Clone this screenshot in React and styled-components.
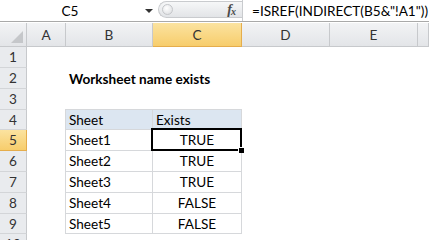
import React from "react"
import styled, { createGlobalStyle, css } from "styled-components"

const GlobalStyle = createGlobalStyle`
	html, body {
		margin: 0;
		padding: 0;
		background: #fff;
	}
	body {
		font-family: Lato, "Liberation Sans", sans-serif;
		color: #000;
	}
`

const COLS = "27px 39px 87px 89px 88px 88px 1fr"
const ROW_HEIGHTS = [21, 21, 21, 20, 21, 21, 21, 21, 20, 21]
const FONT = "13.6px"

const Screen = styled.div`
	width: 429px;
	height: 240px;
	overflow: hidden;
	background: #fff;
`

const FormulaBar = styled.div`
	display: flex;
	align-items: flex-start;
	height: 21px;
	border-bottom: 1px solid #a9a9a9;
	margin-bottom: 1px;
	& > * {
		flex-shrink: 0;
	}
`

const NameBox = styled.div`
	width: 140px;
	height: 21px;
	display: flex;
	align-items: center;
	justify-content: center;
	font-size: ${FONT};
`

const Dropdown = styled.div`
	width: 18px;
	height: 21px;
	display: flex;
	align-items: center;
	justify-content: center;
	&::after {
		content: '';
		border-left: 4px solid transparent;
		border-right: 4px solid transparent;
		border-top: 4px solid #333;
	}
`

const Grip = styled.div`
	display: flex;
	align-items: center;
	width: 84px;
	height: 17px;
	margin-top: 1px;
	box-sizing: border-box;
	border: 1px solid #c9cbce;
	border-right: none;
	border-radius: 9px 0 0 9px;
	background: linear-gradient(#f6f7f8, #e2e4e7);
`

const GripDot = styled.div`
	width: 9px;
	height: 9px;
	margin-left: 3px;
	border-radius: 50%;
	border: 1px solid #c4c6c9;
	background: radial-gradient(circle at 40% 35%, #ffffff, #d9dbde);
`

const Fx = styled.span`
	margin-left: auto;
	margin-right: 7px;
	font-family: "Liberation Serif", serif;
	font-style: italic;
	font-weight: bold;
	font-size: 14px;
	color: #4a4a4a;
	letter-spacing: -1px;
	sub {
		font-size: 10px;
		vertical-align: -1px;
	}
`

const FormulaInput = styled.div`
	flex: 1 1 auto !important;
	height: 21px;
	display: flex;
	align-items: center;
	padding-left: 9px;
	border-left: 1px solid #c9cbce;
	font-size: ${FONT};
	white-space: nowrap;
	overflow: hidden;
`

const Row = styled.div`
	display: grid;
	grid-template-columns: ${COLS};
	height: ${props => props.height}px;
`

const ColHeader = styled.div`
	background: ${props => (props.active
		? "linear-gradient(#fbe3a0, #f7cd6c)"
		: "linear-gradient(#f2f3f5, #e3e5e8)")};
	color: #333;
	box-sizing: border-box;
	border-right: 1px solid ${props => (props.active ? "#e5ad4c" : "#c7c9cc")};
	border-bottom: 1px solid ${props => (props.active ? "#e5ad4c" : "#c7c9cc")};
	display: flex;
	align-items: center;
	justify-content: center;
	font-size: ${FONT};
`

const Corner = styled(ColHeader)`
	position: relative;
	&::after {
		content: '';
		position: absolute;
		right: 3px;
		bottom: 3px;
		border-left: 12px solid transparent;
		border-bottom: 12px solid #c5c7ca;
	}
`

const RowHeader = styled.div`
	background: ${props => (props.active ? "linear-gradient(#fbe3a0, #f7cd6c)" : "#e9ebee")};
	color: #333;
	box-sizing: border-box;
	border-right: 1px solid ${props => (props.active ? "#e5ad4c" : "#c7c9cc")};
	border-bottom: 1px solid ${props => (props.active ? "#e5ad4c" : "#d3d5d8")};
	display: flex;
	align-items: center;
	justify-content: center;
	font-size: ${FONT};
`

const Cell = styled.div`
	box-sizing: border-box;
	display: flex;
	align-items: center;
	justify-content: ${props => (props.center ? "center" : "flex-start")};
	padding: 0 3px;
	font-size: ${FONT};
	font-weight: ${props => (props.bold ? 700 : 400)};
	white-space: nowrap;
	position: relative;
	${props => props.table && css`
		border-right: 1px solid #d6d8db;
		border-bottom: 1px solid #d6d8db;
	`}
	${props => props.first && css`
		border-left: 1px solid #d6d8db;
		margin-left: -1px;
	`}
	${props => props.head && css`
		background: #dce6f1;
		border-top: 1px solid #d6d8db;
		margin-top: -1px;
	`}
	${props => props.selected && css`
		&::after {
			content: '';
			position: absolute;
			top: -2px;
			left: -2px;
			right: -1px;
			bottom: -1px;
			border: 2px solid #000;
			z-index: 2;
		}
		&::before {
			content: '';
			position: absolute;
			right: -3px;
			bottom: -3px;
			width: 5px;
			height: 5px;
			background: #000;
			border-left: 1px solid #fff;
			border-top: 1px solid #fff;
			z-index: 3;
		}
	`}
`

const data = [
	{ sheet: "Sheet1", exists: "TRUE" },
	{ sheet: "Sheet2", exists: "TRUE" },
	{ sheet: "Sheet3", exists: "TRUE" },
	{ sheet: "Sheet4", exists: "FALSE" },
	{ sheet: "Sheet5", exists: "FALSE" }
]

const columns = ["A", "B", "C", "D", "E", ""]

const renderCells = (n) => {
	if (n === 2) {
		return [<Cell key="a" />, <Cell key="b" bold>Worksheet name exists</Cell>]
	}
	if (n === 4) {
		return [
			<Cell key="a" />,
			<Cell key="b" table first head>Sheet</Cell>,
			<Cell key="c" table head>Exists</Cell>
		]
	}
	if (n >= 5 && n <= 9) {
		const item = data[n - 5]
		return [
			<Cell key="a" />,
			<Cell key="b" table first>{item.sheet}</Cell>,
			<Cell key="c" table center selected={n === 5}>{item.exists}</Cell>
		]
	}
	return null
}

const App = () => (
	<Screen>
		<GlobalStyle />
		<FormulaBar>
			<NameBox>C5</NameBox>
			<Dropdown />
			<Grip>
				<GripDot />
				<Fx>f<sub>x</sub></Fx>
			</Grip>
			<FormulaInput>=ISREF(INDIRECT(B5&amp;"!A1"))</FormulaInput>
		</FormulaBar>
		<Row height={24}>
			<Corner />
			{columns.map(c => (
				<ColHeader key={c || "f"} active={c === "C"}>{c}</ColHeader>
			))}
		</Row>
		{ROW_HEIGHTS.map((h, i) => (
			<Row key={i} height={h}>
				<RowHeader active={i + 1 === 5}>{i + 1}</RowHeader>
				{renderCells(i + 1)}
			</Row>
		))}
	</Screen>
)

export default App
